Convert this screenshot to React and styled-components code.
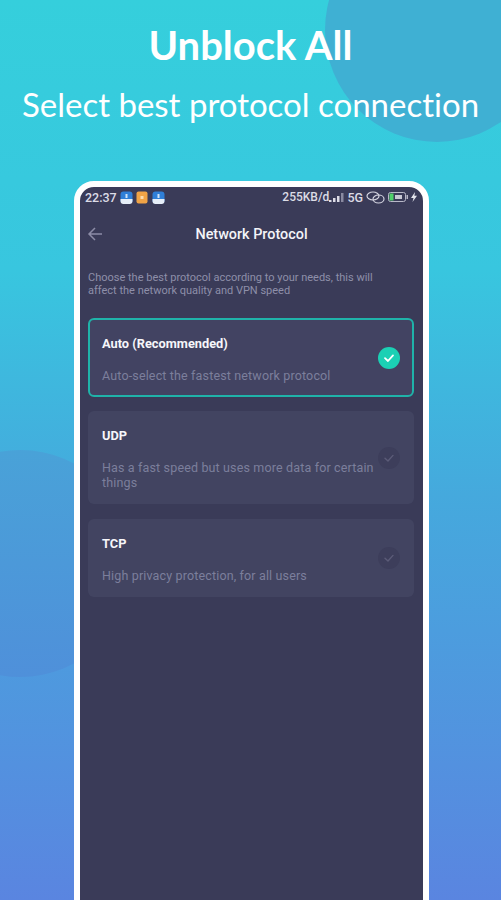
import React from 'react'
import styled, { createGlobalStyle } from 'styled-components'

const GlobalStyle = createGlobalStyle`
  html, body {
    margin: 0;
    padding: 0;
    height: 900px;
    overflow: hidden;
    font-family: Roboto, "Liberation Sans", sans-serif;
  }
`

const Page = styled.div`
  position: relative;
  width: 501px;
  height: 900px;
  overflow: hidden;
  display: flex;
  flex-direction: column;
  align-items: center;
  background: linear-gradient(180deg, #35cfdc 0%, #38c6df 30%, #45a9dd 55%, #5a85e0 100%);
`

const TopCircle = styled.div`
  position: absolute;
  left: 325px;
  top: -82px;
  width: 224px;
  height: 224px;
  border-radius: 50%;
  background: #3fb0d3;
`

const SideCircle = styled.div`
  position: absolute;
  left: -93px;
  top: 450px;
  width: 227px;
  height: 227px;
  border-radius: 50%;
  background: linear-gradient(180deg, #49a2d8 0%, #4f90da 100%);
`

const Headline = styled.h1`
  position: relative;
  margin: 23px 0 0;
  font-family: Lato, "Open Sans", sans-serif;
  font-size: 40px;
  line-height: 44px;
  font-weight: 700;
  color: #fff;
`

const Subline = styled.h2`
  position: relative;
  margin: 17px 0 0;
  font-family: Lato, "Open Sans", sans-serif;
  font-size: 33px;
  line-height: 40px;
  font-weight: 400;
  font-variant-ligatures: none;
  color: #fff;
  white-space: nowrap;
`

const Phone = styled.div`
  position: relative;
  flex: none;
  box-sizing: border-box;
  width: 355px;
  height: 760px;
  margin-top: 57px;
  margin-left: 2px;
  border: 6px solid #fff;
  border-radius: 20px;
  background: #3a3b58;
  overflow: hidden;
`

const StatusBar = styled.div`
  display: flex;
  align-items: center;
  justify-content: space-between;
  height: 20px;
  padding: 0 6px 0 5px;
  font-size: 12.5px;
  font-weight: 500;
  color: #dcdce6;
`

const StatusGroup = styled.div`
  display: flex;
  align-items: center;
  gap: 3px;
`

const SpeedText = styled.span`
  font-size: 12px;
  margin-right: -3px;
`

const NavBar = styled.div`
  position: relative;
  display: flex;
  align-items: center;
  justify-content: center;
  height: 34px;
  margin-top: 10px;
`

const BackButton = styled.div`
  position: absolute;
  left: 7px;
  top: 9px;
  display: flex;
`

const NavTitle = styled.div`
  font-size: 14.4px;
  font-weight: 500;
  color: #f4f4f8;
`

const Content = styled.div`
  display: flex;
  flex-direction: column;
  padding: 20px 9px 0 8px;
`

const Intro = styled.p`
  margin: 0 0 21px;
  font-size: 11px;
  line-height: 13px;
  color: #8e8fa9;
`

const Card = styled.div`
  box-sizing: border-box;
  display: flex;
  align-items: center;
  justify-content: space-between;
  min-height: ${props => props.height}px;
  margin-bottom: ${props => props.selected ? 14 : 15}px;
  padding: ${props => props.selected ? '0 12px' : '0 14px'};
  border: ${props => props.selected ? '2px solid #1fb3a9' : 'none'};
  border-radius: 6px;
  background: ${props => props.selected ? '#424362' : '#424461'};
`

const CardText = styled.div`
  display: flex;
  flex-direction: column;
  gap: 17px;
  width: 280px;
  padding-top: 4px;
`

const CardTitle = styled.div`
  font-size: 12.8px;
  line-height: 14px;
  font-weight: 700;
  color: #f6f6fa;
`

const CardDesc = styled.div`
  font-size: 12.5px;
  line-height: 15px;
  letter-spacing: 0.15px;
  color: #7c7f9c;
`

const Tick = styled.div`
  flex: none;
  display: flex;
  align-items: center;
  justify-content: center;
  width: 22px;
  height: 22px;
  border-radius: 50%;
  background: ${props => props.selected ? '#1bd0b4' : '#3d3e5b'};
`

const CheckIcon = ({selected}) => (
  <svg width="12" height="12" viewBox="0 0 12 12" fill="none">
    <path
      d="M2 6.2 L5 9 L10 3.4"
      stroke={selected ? '#ffffff' : '#5c5c78'}
      strokeWidth={selected ? 1.8 : 1.4}
      strokeLinecap="round"
      strokeLinejoin="round"
    />
  </svg>
)

const BackArrow = () => (
  <svg width="16" height="16" viewBox="0 0 16 16" fill="none">
    <path
      d="M15 8 H2 M8 2 L2 8 L8 14"
      stroke="#8c8ca6"
      strokeWidth="1.5"
    />
  </svg>
)

const AppBadge = ({color}) => (
  <svg width="13" height="13" viewBox="0 0 13 13">
    {color === 'orange' ? (
      <g>
        <rect x="0.5" y="0.5" width="11" height="12" rx="2" fill="#f0a346" />
        <rect x="4.5" y="5" width="3" height="3" fill="#fbdcae" />
      </g>
    ) : (
      <g>
        <rect x="0.5" y="0.5" width="12" height="12" rx="3" fill="#2f7fd8" />
        <path d="M0.5 8 H12.5 V10 a3 3 0 0 1 -3 3 H3.500 a3 3 0 0 1 -3 -3 Z" fill="#e6eef8" />
        <rect x="5.500" y="3" width="2" height="4" fill="#cfe3f8" />
      </g>
    )}
  </svg>
)

const SignalBars = () => (
  <svg width="15" height="11" viewBox="0 0 15 11" fill="#dcdce6">
    <rect x="0" y="8" width="2.500" height="2" />
    <rect x="4" y="6" width="2.500" height="4" />
    <rect x="8" y="4" width="2.500" height="6" />
    <rect x="12" y="1" width="2.500" height="9" fill="#8a8aa0" />
  </svg>
)

const LinkRings = () => (
  <svg width="19" height="13" viewBox="0 0 19 13" fill="none" stroke="#d4d4e0" strokeWidth="1.2">
    <ellipse cx="7" cy="5" rx="6" ry="4" />
    <ellipse cx="12.500" cy="8" rx="5.500" ry="4" />
  </svg>
)

const Battery = () => (
  <svg width="20" height="10" viewBox="0 0 20 10" fill="none">
    <rect x="0.500" y="0.500" width="17" height="9" rx="2" stroke="#b8b8c8" />
    <rect x="1.500" y="1.500" width="4" height="7" fill="#4fd06a" />
    <rect x="7" y="3" width="7" height="4" fill="#c8c8d4" />
    <rect x="18.500" y="3" width="1.500" height="4" fill="#b8b8c8" />
  </svg>
)

const Bolt = () => (
  <svg width="6" height="10" viewBox="0 0 6 10" fill="#e4e4ec">
    <path d="M4 0 L0 6 H2.500 L1.500 10 L6 3.800 H3.400 Z" />
  </svg>
)

const protocols = [
  {title: 'Auto (Recommended)', desc: 'Auto-select the fastest network protocol', selected: true, height: 79},
  {title: 'UDP', desc: 'Has a fast speed but uses more data for certain things', height: 93},
  {title: 'TCP', desc: 'High privacy protection, for all users', height: 78},
]

const App = () => (
  <Page>
    <GlobalStyle />
    <TopCircle />
    <SideCircle />
    <Headline>Unblock All</Headline>
    <Subline>Select best protocol connection</Subline>
    <Phone>
      <StatusBar>
        <StatusGroup>
          22:37
          <AppBadge />
          <AppBadge color="orange" />
          <AppBadge />
        </StatusGroup>
        <StatusGroup>
          <SpeedText>255KB/d</SpeedText>
          <SignalBars />
          <span>5G</span>
          <LinkRings />
          <Battery />
          <Bolt />
        </StatusGroup>
      </StatusBar>
      <NavBar>
        <BackButton><BackArrow /></BackButton>
        <NavTitle>Network Protocol</NavTitle>
      </NavBar>
      <Content>
        <Intro>
          Choose the best protocol according to your needs, this will
          <br />
          affect the network quality and VPN speed
        </Intro>
        {protocols.map(p => (
          <Card key={p.title} selected={p.selected} height={p.height}>
            <CardText>
              <CardTitle>{p.title}</CardTitle>
              <CardDesc>{p.desc}</CardDesc>
            </CardText>
            <Tick selected={p.selected}><CheckIcon selected={p.selected} /></Tick>
          </Card>
        ))}
      </Content>
    </Phone>
  </Page>
)

export default App
